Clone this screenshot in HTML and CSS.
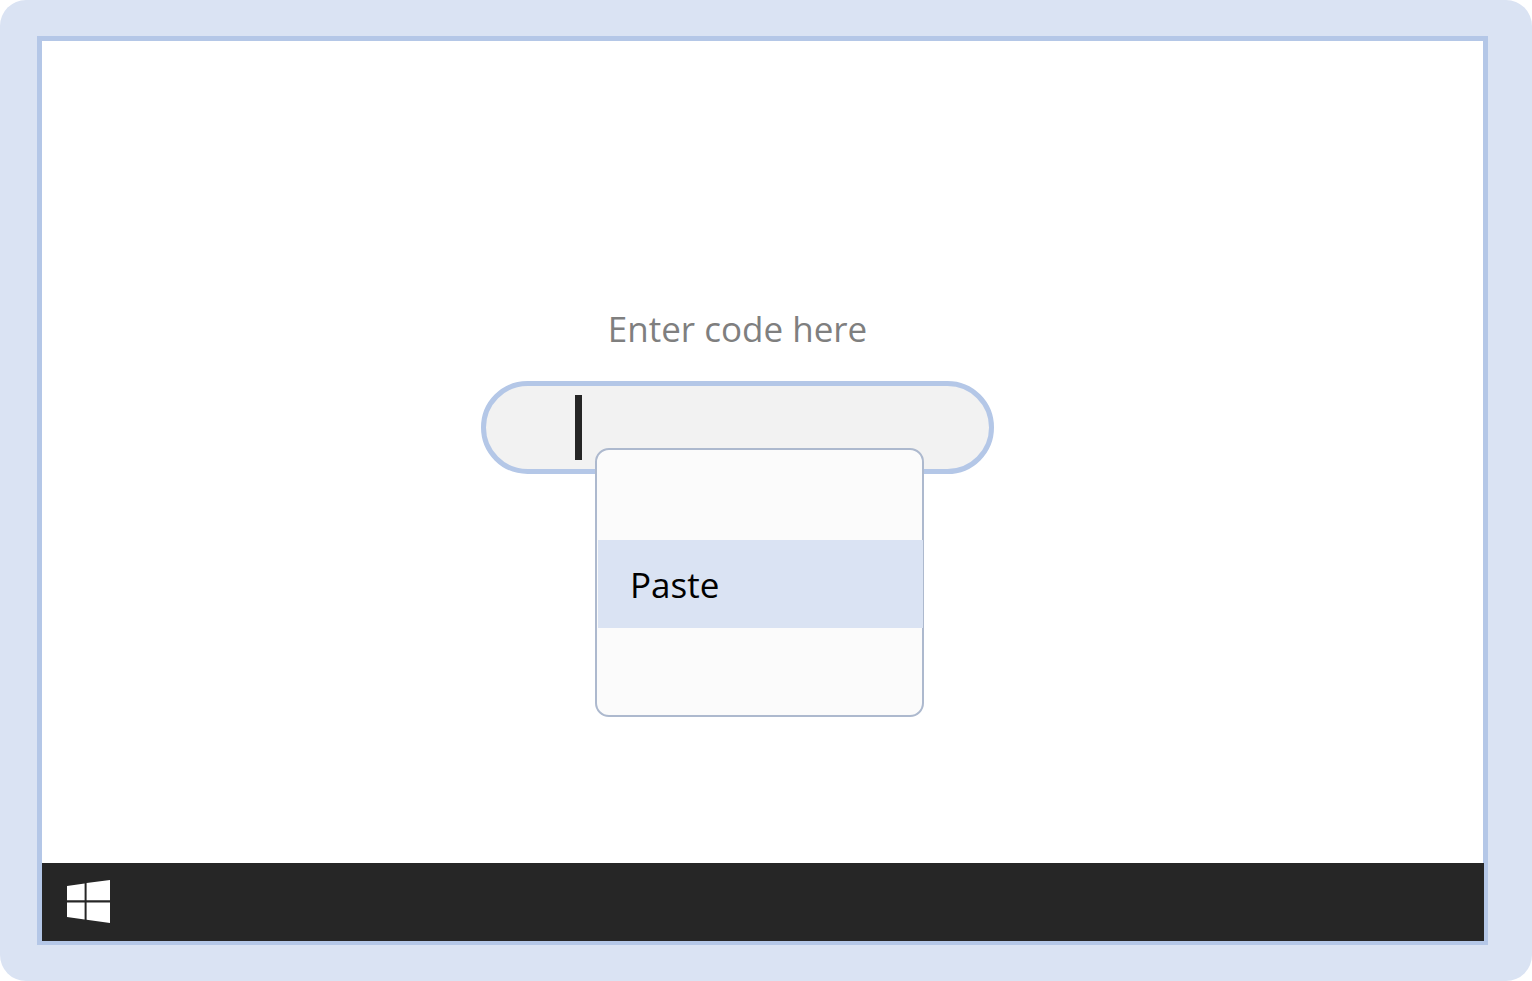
FILE: index.html
```html
<!DOCTYPE html>
<html lang="en">
<head>
<meta charset="utf-8">
<title>Enter code</title>
<link rel="stylesheet" href="styles.css">
</head>
<body>
<div class="bezel">
  <div class="screen">
    <main class="desktop">
      <form class="code-form">
        <label class="code-label" for="code">Enter code here</label>
        <div class="code-field">
          <input class="code-input" id="code" type="text" autocomplete="off">
          <span class="caret" aria-hidden="true"></span>
          <div class="context-menu" role="menu">
            <button class="menu-item" type="button" role="menuitem">Paste</button>
          </div>
        </div>
      </form>
    </main>
    <footer class="taskbar">
      <button class="start-button" type="button" aria-label="Start">
        <svg class="start-icon" viewBox="0 0 43 43" aria-hidden="true">
          <path d="M0 5.9 17.6 3.4V20.3H0zM19.6 3.1 43 0V20.3H19.6zM0 22.4H17.6V39.4L0 37zM19.6 22.4H43V43L19.6 39.7z"/>
        </svg>
      </button>
    </footer>
  </div>
</div>
</body>
</html>
```
FILE: styles.css
```css
* {
  box-sizing: border-box;
}

body {
  margin: 0;
  background: #fff;
  font-family: "Segoe UI", "Open Sans", "Noto Sans", sans-serif;
}

.bezel {
  display: flex;
  min-height: 100vh;
  padding: 36px 44px 36px 37px;
  border-radius: 26px;
  background: #dae3f3;
}

.screen {
  display: flex;
  flex: 1;
  flex-direction: column;
  border: 5px solid #b4c7e7;
  border-bottom-width: 4px;
  background: #fff;
}

.desktop {
  display: flex;
  flex: 1;
  justify-content: center;
  padding: 264px 50px 0 0;
}

.code-form {
  display: flex;
  flex-direction: column;
  align-items: center;
  gap: 28px;
  width: 513px;
}

.code-label {
  color: #7f7f7f;
  font-size: 35px;
  line-height: 48px;
}

.code-field {
  position: relative;
  width: 100%;
}

.code-input {
  display: block;
  width: 100%;
  height: 93px;
  padding: 0 94px;
  border: 5px solid #b4c7e7;
  border-radius: 47px;
  outline: none;
  background: #f2f2f2;
  color: #262626;
  font: inherit;
  font-size: 35px;
}

.caret {
  position: absolute;
  top: 14px;
  left: 94px;
  width: 7px;
  height: 65px;
  background: #262626;
}

.context-menu {
  position: absolute;
  top: 67px;
  left: 114px;
  display: flex;
  width: 329px;
  padding: 90px 0 87px;
  border: 2px solid #adb9ce;
  border-radius: 14px;
  background: #fbfbfb;
}

.menu-item {
  flex: 1;
  height: 88px;
  margin: 0 -1px 0 1px;
  padding: 2px 32px 0;
  border: 0;
  background: #dae3f3;
  color: #000;
  font: inherit;
  font-size: 35px;
  line-height: 48px;
  text-align: left;
}

.taskbar {
  display: flex;
  align-items: center;
  height: 78px;
  margin-right: -1px;
  padding: 0 25px 2px;
  background: #262626;
}

.start-button {
  padding: 0;
  border: 0;
  background: none;
}

.start-icon {
  display: block;
  width: 43px;
  height: 43px;
  fill: #fff;
}
```
